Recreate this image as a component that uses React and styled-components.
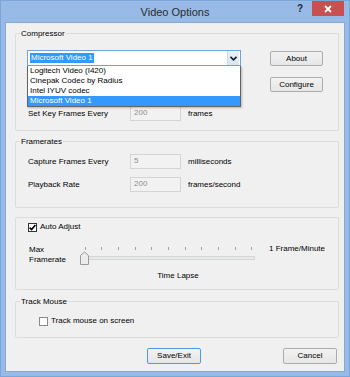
import React from "react";
import styled, { createGlobalStyle } from "styled-components";

const Global = createGlobalStyle`
  html, body { margin: 0; padding: 0; background: #fff; }
  * { box-sizing: border-box; }
`;

const Window = styled.div`
  width: 350px;
  height: 377px;
  background: #98bae6;
  box-shadow: inset 0 0 0 1px #7ea5d8;
  display: flex;
  flex-direction: column;
  font-family: "Liberation Sans", Arial, sans-serif;
  font-size: 8px;
  color: #000;
`;

const TitleBar = styled.div`
  height: 23px;
  display: grid;
  grid-template-columns: 1fr auto 1fr;
  align-items: start;
`;

const Title = styled.div`
  grid-column: 2;
  font-size: 11px;
  line-height: 13px;
  padding-top: 6px;
  color: #2b2b2b;
`;

const Controls = styled.div`
  grid-column: 3;
  justify-self: end;
  display: flex;
  align-items: flex-start;
  margin-right: 6px;
`;

const Help = styled.div`
  font-size: 10px;
  font-weight: bold;
  color: #1e2a3a;
  line-height: 12px;
  padding-top: 3px;
  margin-right: 9px;
`;

const Close = styled.div`
  width: 32px;
  height: 15px;
  margin-top: 1px;
  background: #c75050;
  display: flex;
  align-items: center;
  justify-content: center;
`;

const Client = styled.div`
  flex: 1;
  margin: 0 6px 6px 6px;
  background: #f0f0f0;
  box-shadow: 0 0 0 1px #86a8d3;
  padding: 10px 5px 0 9px;
  display: flex;
  flex-direction: column;
`;

const Group = styled.div`
  position: relative;
  border: 1px solid #dcdcdc;
  border-radius: 2px;
  height: ${(p) => p.$h}px;
  margin-top: ${(p) => p.$mt || 0}px;
  padding: ${(p) => p.$pad};
  display: flex;
  flex-direction: column;
  flex-shrink: 0;
`;

const Legend = styled.div`
  position: absolute;
  top: -5px;
  left: 4px;
  padding: 0 1px;
  background: #f0f0f0;
  line-height: 10px;
  white-space: nowrap;
`;

const Row = styled.div`
  display: flex;
  align-items: ${(p) => p.$align || "center"};
  justify-content: ${(p) => p.$justify || "flex-start"};
  margin-top: ${(p) => p.$mt || 0}px;
  padding-left: ${(p) => p.$pl || 0}px;
`;

const ComboWrap = styled.div`
  position: relative;
  width: 214px;
  height: 16px;
  z-index: 2;
`;

const ComboBox = styled.div`
  width: 100%;
  height: 16px;
  border: 1px solid #6fa5dc;
  background: #fff;
  display: flex;
  align-items: center;
  padding: 1px;
`;

const Selected = styled.span`
  background: #3399ff;
  color: #fff;
  line-height: 10px;
  padding: 0 1px;
  margin-left: 1px;
`;

const ArrowBtn = styled.div`
  margin-left: auto;
  width: 12px;
  height: 14px;
  border-left: 1px solid #c5d9ef;
  background: linear-gradient(#eaf2fb, #d6e6f7);
  display: flex;
  align-items: center;
  justify-content: center;
`;

const DropList = styled.div`
  position: absolute;
  top: 16px;
  left: 0;
  width: 214px;
  background: #fff;
  border: 1px solid #646464;
  border-top: none;
  box-shadow: 1px 1px 2px rgba(0, 0, 0, 0.25);
`;

const Item = styled.div`
  height: 10px;
  line-height: 10px;
  padding-left: 2px;
  background: ${(p) => (p.$active ? "#3399ff" : "transparent")};
  color: ${(p) => (p.$active ? "#fff" : "#000")};
  white-space: nowrap;
`;

const Button = styled.div`
  width: ${(p) => p.$w || 53}px;
  height: ${(p) => p.$hgt || 15}px;
  margin-top: ${(p) => p.$mt || 0}px;
  border: 1px solid ${(p) => (p.$default ? "#4a9be0" : "#acacac")};
  border-radius: 2px;
  background: linear-gradient(#f2f2f2, #e6e6e6);
  display: flex;
  align-items: center;
  justify-content: center;
  line-height: 10px;
  flex-shrink: 0;
`;

const FieldLabel = styled.div`
  width: ${(p) => p.$w || 102}px;
  line-height: 10px;
  white-space: nowrap;
`;

const Input = styled.div`
  width: 51px;
  height: 15px;
  border: 1px solid #d4d4d4;
  background: #f2f2f2;
  color: #8d8d8d;
  line-height: 12px;
  padding-left: 3px;
`;

const Unit = styled.div`
  margin-left: 7px;
  line-height: 10px;
`;

const Check = styled.div`
  width: 9px;
  height: 9px;
  border: 1px solid ${(p) => (p.$on ? "#333" : "#8a8a8a")};
  background: #fff;
  display: flex;
  align-items: center;
  justify-content: center;
  flex-shrink: 0;
`;

const CheckText = styled.span`
  margin-left: 3px;
  line-height: 10px;
`;

const TwoLine = styled.div`
  width: 52px;
  padding-left: 1px;
  line-height: 10px;
`;

const SideLabel = styled.div`
  margin-left: 13px;
  margin-top: -1px;
  line-height: 10px;
  white-space: nowrap;
`;

const Centered = styled.div`
  text-align: center;
  padding-right: 10px;
  line-height: 10px;
  margin-top: ${(p) => p.$mt || 0}px;
`;

const ButtonBar = styled.div`
  display: flex;
  align-items: center;
  margin-top: 10px;
  padding-left: 132px;
  padding-right: 2px;
  justify-content: space-between;
`;

function Slider() {
  const ticks = Array.from({ length: 11 }, (_, i) => 4.5 + i * 16.67);
  return (
    <svg width="176" height="22" viewBox="0 0 176 22">
      {ticks.map((x, i) => (
        <line key={i} x1={Math.round(x) + 0.5} y1="2" x2={Math.round(x) + 0.5} y2="5" stroke="#a0a0a0" strokeWidth="1" />
      ))}
      <rect x="4.5" y="11.5" width="170" height="3" fill="#e7eaea" stroke="#d6d6d6" />
      <path d="M0.5 19.5 L0.5 10.5 L4.5 7 L8.5 10.5 L8.5 19.5 Z" fill="#ececec" stroke="#9a9a9a" />
    </svg>
  );
}

export default function App() {
  return (
    <>
      <Global />
      <Window>
        <TitleBar>
          <Title>Video Options</Title>
          <Controls>
            <Help>?</Help>
            <Close>
              <svg width="8" height="8" viewBox="0 0 8 8">
                <path d="M1 1 L7 7 M7 1 L1 7" stroke="#fff" strokeWidth="1.8" />
              </svg>
            </Close>
          </Controls>
        </TitleBar>
        <Client>
          <Group $h={98} $pad="16px 15px 0 11px">
            <Legend>Compressor</Legend>
            <Row $align="flex-start" $justify="space-between">
              <ComboWrap>
                <ComboBox>
                  <Selected>Microsoft Video 1</Selected>
                  <ArrowBtn>
                    <svg width="7" height="5" viewBox="0 0 7 5">
                      <path d="M0.5 0.8 L3.5 3.8 L6.5 0.8" fill="none" stroke="#1a1a1a" strokeWidth="1.6" />
                    </svg>
                  </ArrowBtn>
                </ComboBox>
                <DropList>
                  <Item>Logitech Video (I420)</Item>
                  <Item>Cinepak Codec by Radius</Item>
                  <Item>Intel IYUV codec</Item>
                  <Item $active>Microsoft Video 1</Item>
                </DropList>
              </ComboWrap>
              <Button $mt={1}>About</Button>
            </Row>
            <Row $justify="flex-end" $mt={11}>
              <Button>Configure</Button>
            </Row>
            <Row $mt={14} $pl={1}>
              <FieldLabel>Set Key Frames Every</FieldLabel>
              <Input>200</Input>
              <Unit>frames</Unit>
            </Row>
          </Group>

          <Group $h={67} $mt={10} $pad="12px 0 0 12px">
            <Legend>Framerates</Legend>
            <Row>
              <FieldLabel>Capture Frames Every</FieldLabel>
              <Input>5</Input>
              <Unit>milliseconds</Unit>
            </Row>
            <Row $mt={8}>
              <FieldLabel>Playback Rate</FieldLabel>
              <Input>200</Input>
              <Unit>frames/second</Unit>
            </Row>
          </Group>

          <Group $h={73} $mt={9} $pad="4px 0 0 12px">
            <Row>
              <Check $on>
                <svg width="7" height="7" viewBox="0 0 7 7">
                  <path d="M0.6 3.6 L2.6 5.6 L6.4 1" fill="none" stroke="#000" strokeWidth="1.6" />
                </svg>
              </Check>
              <CheckText>Auto Adjust</CheckText>
            </Row>
            <Row $align="flex-start" $mt={13}>
              <TwoLine>
                Max
                <br />
                Framerate
              </TwoLine>
              <Slider />
              <SideLabel>1 Frame/Minute</SideLabel>
            </Row>
            <Centered $mt={4}>Time Lapse</Centered>
          </Group>

          <Group $h={37} $mt={11} $pad="14px 0 0 23px">
            <Legend>Track Mouse</Legend>
            <Row>
              <Check />
              <CheckText>Track mouse on screen</CheckText>
            </Row>
          </Group>

          <ButtonBar>
            <Button $default $w={54} $hgt={16}>
              Save/Exit
            </Button>
            <Button $w={54} $hgt={16}>
              Cancel
            </Button>
          </ButtonBar>
        </Client>
      </Window>
    </>
  );
}
